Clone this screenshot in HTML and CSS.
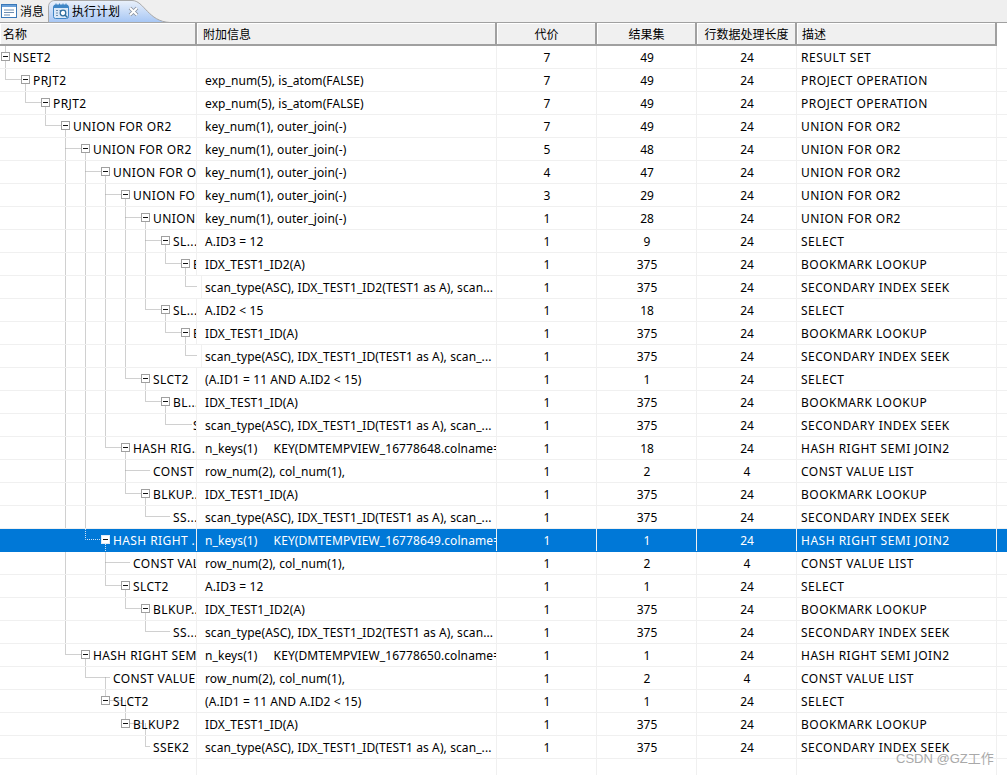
FILE: index.html
```html
<!DOCTYPE html>
<html lang="zh-CN">
<head>
<meta charset="utf-8">
<title>执行计划</title>
<link rel="stylesheet" href="styles.css">
</head>
<body>
<div class="app">
  <div class="tabs">
    <div class="tab">
      <svg class="ticon" width="16" height="14" viewBox="0 0 16 14"><rect x="0.500" y="0.500" width="15" height="13" fill="#fff" stroke="#3a78b8"/><rect x="1" y="1" width="14" height="2" fill="#6aa0d8"/><path d="M3 6h10M3 8.500h10M3 11h6" stroke="#6d8db0" fill="none"/></svg>
      <span>消息</span>
    </div>
    <div class="tab active">
      <svg class="tabshape" width="126" height="23" viewBox="0 0 126 23"><defs><linearGradient id="tabfill" x1="0" y1="0" x2="0" y2="1"><stop offset="0" stop-color="#eaf1fb"/><stop offset="1" stop-color="#a6c6f4"/></linearGradient></defs><path d="M0.500 22.500V7C0.500 3 3 0.500 7 0.500H84C96 0.500 100 21.500 122 22.500Z" fill="url(#tabfill)" stroke="#a8a8a8"/></svg>
      <svg class="ticon" width="16" height="16" viewBox="0 0 16 16"><rect x="0.500" y="2" width="15" height="13.500" rx="2" fill="#dbe9f8" stroke="#3f86c6"/><rect x="1" y="2" width="14" height="3" fill="#3f86c6"/><path d="M3 0.500v3M6.500 0.500v3M10 0.500v3M13 0.500v3" stroke="#3f86c6"/><path d="M3 7.500h2M3 10h2M3 12.500h2M6.500 7.500h2" stroke="#6d8db0"/><circle cx="10" cy="10" r="2.800" fill="#fff" stroke="#2f6f9f" stroke-width="1.300"/><path d="M12 12l2.500 2.500" stroke="#2f6f9f" stroke-width="1.500"/></svg>
      <span>执行计划</span>
      <svg class="close" width="11" height="11" viewBox="0 0 11 11"><path d="M2 2l7 7M9 2l-7 7" stroke="#8a929e" stroke-width="3.600"/><path d="M2 2l7 7M9 2l-7 7" stroke="#fff" stroke-width="2"/></svg>
    </div>
  </div>

  <div class="table">
    <div class="head">
      <div class="hcell">名称</div>
      <div class="hcell">附加信息</div>
      <div class="hcell mid">代价</div>
      <div class="hcell mid">结果集</div>
      <div class="hcell mid">行数据处理长度</div>
      <div class="hcell">描述</div>
    </div>

    <div class="body">
      <svg class="guides" width="197" height="729" viewBox="0 46 197 729">
        <path transform="translate(0 -0.500)" d="M5.500 46V80H22M25.500 80V103H42M45.500 103V126H62M65.500 126V149H82M65.500 149V655H82M85.500 149V172H102M85.500 172V529M105.500 172V195H122M105.500 195V448H122M125.500 195V218H142M125.500 218V379H142M145.500 218V241H162M145.500 241V310H162M165.500 241V264H182M185.500 264V287H197M165.500 310V333H182M185.500 333V356H197M145.500 379V402H162M165.500 402V425H192M125.500 448V471H150M125.500 471V494H142M145.500 494V517H170M105.500 552V563H130M105.500 563V586H122M125.500 586V609H142M145.500 609V632H170M85.500 655V678H110M105.500 678V701H122M125.500 701V724H142M145.500 724V747H150" fill="none" stroke="#a0a0a0" stroke-dasharray="1 1"/>
      </svg>

      <div class="row"><div class="cell name d0"><i class="box"></i><span>NSET2</span></div><div class="cell info"></div><div class="cell num">7</div><div class="cell num">49</div><div class="cell num">24</div><div class="cell desc">RESULT SET</div><div class="tail"></div></div>
      <div class="row"><div class="cell name d1"><i class="box"></i><span>PRJT2</span></div><div class="cell info">exp_num(5), is_atom(FALSE)</div><div class="cell num">7</div><div class="cell num">49</div><div class="cell num">24</div><div class="cell desc">PROJECT OPERATION</div><div class="tail"></div></div>
      <div class="row"><div class="cell name d2"><i class="box"></i><span>PRJT2</span></div><div class="cell info">exp_num(5), is_atom(FALSE)</div><div class="cell num">7</div><div class="cell num">49</div><div class="cell num">24</div><div class="cell desc">PROJECT OPERATION</div><div class="tail"></div></div>
      <div class="row"><div class="cell name d3"><i class="box"></i><span>UNION FOR OR2</span></div><div class="cell info">key_num(1), outer_join(-)</div><div class="cell num">7</div><div class="cell num">49</div><div class="cell num">24</div><div class="cell desc">UNION FOR OR2</div><div class="tail"></div></div>
      <div class="row"><div class="cell name d4"><i class="box"></i><span>UNION FOR OR2</span></div><div class="cell info">key_num(1), outer_join(-)</div><div class="cell num">5</div><div class="cell num">48</div><div class="cell num">24</div><div class="cell desc">UNION FOR OR2</div><div class="tail"></div></div>
      <div class="row"><div class="cell name d5"><i class="box"></i><span>UNION FOR OR2</span></div><div class="cell info">key_num(1), outer_join(-)</div><div class="cell num">4</div><div class="cell num">47</div><div class="cell num">24</div><div class="cell desc">UNION FOR OR2</div><div class="tail"></div></div>
      <div class="row"><div class="cell name d6"><i class="box"></i><span>UNION FOR OR2</span></div><div class="cell info">key_num(1), outer_join(-)</div><div class="cell num">3</div><div class="cell num">29</div><div class="cell num">24</div><div class="cell desc">UNION FOR OR2</div><div class="tail"></div></div>
      <div class="row"><div class="cell name d7"><i class="box"></i><span>UNION FOR OR2</span></div><div class="cell info">key_num(1), outer_join(-)</div><div class="cell num">1</div><div class="cell num">28</div><div class="cell num">24</div><div class="cell desc">UNION FOR OR2</div><div class="tail"></div></div>
      <div class="row"><div class="cell name d8"><i class="box"></i><span>SL...</span></div><div class="cell info">A.ID3 = 12</div><div class="cell num">1</div><div class="cell num">9</div><div class="cell num">24</div><div class="cell desc">SELECT</div><div class="tail"></div></div>
      <div class="row"><div class="cell name d9"><i class="box"></i><span>BLKUP2</span></div><div class="cell info">IDX_TEST1_ID2(A)</div><div class="cell num">1</div><div class="cell num">375</div><div class="cell num">24</div><div class="cell desc">BOOKMARK LOOKUP</div><div class="tail"></div></div>
      <div class="row"><div class="cell name d10"><i class="box leaf"></i><span>SSEK2</span></div><div class="cell info">scan_type(ASC), IDX_TEST1_ID2(TEST1 as A), scan...</div><div class="cell num">1</div><div class="cell num">375</div><div class="cell num">24</div><div class="cell desc">SECONDARY INDEX SEEK</div><div class="tail"></div></div>
      <div class="row"><div class="cell name d8"><i class="box"></i><span>SL...</span></div><div class="cell info">A.ID2 &lt; 15</div><div class="cell num">1</div><div class="cell num">18</div><div class="cell num">24</div><div class="cell desc">SELECT</div><div class="tail"></div></div>
      <div class="row"><div class="cell name d9"><i class="box"></i><span>BLKUP2</span></div><div class="cell info">IDX_TEST1_ID(A)</div><div class="cell num">1</div><div class="cell num">375</div><div class="cell num">24</div><div class="cell desc">BOOKMARK LOOKUP</div><div class="tail"></div></div>
      <div class="row"><div class="cell name d10"><i class="box leaf"></i><span>SSEK2</span></div><div class="cell info">scan_type(ASC), IDX_TEST1_ID(TEST1 as A), scan_...</div><div class="cell num">1</div><div class="cell num">375</div><div class="cell num">24</div><div class="cell desc">SECONDARY INDEX SEEK</div><div class="tail"></div></div>
      <div class="row"><div class="cell name d7"><i class="box"></i><span>SLCT2</span></div><div class="cell info">(A.ID1 = 11 AND A.ID2 &lt; 15)</div><div class="cell num">1</div><div class="cell num">1</div><div class="cell num">24</div><div class="cell desc">SELECT</div><div class="tail"></div></div>
      <div class="row"><div class="cell name d8"><i class="box"></i><span>BL...</span></div><div class="cell info">IDX_TEST1_ID(A)</div><div class="cell num">1</div><div class="cell num">375</div><div class="cell num">24</div><div class="cell desc">BOOKMARK LOOKUP</div><div class="tail"></div></div>
      <div class="row"><div class="cell name d9"><i class="box leaf"></i><span>SSEK2</span></div><div class="cell info">scan_type(ASC), IDX_TEST1_ID(TEST1 as A), scan_...</div><div class="cell num">1</div><div class="cell num">375</div><div class="cell num">24</div><div class="cell desc">SECONDARY INDEX SEEK</div><div class="tail"></div></div>
      <div class="row"><div class="cell name d6"><i class="box"></i><span>HASH RIG...</span></div><div class="cell info">n_keys(1) &nbsp; &nbsp; KEY(DMTEMPVIEW_16778648.colname=DMTEMPVIEW</div><div class="cell num">1</div><div class="cell num">18</div><div class="cell num">24</div><div class="cell desc">HASH RIGHT SEMI JOIN2</div><div class="tail"></div></div>
      <div class="row"><div class="cell name d7"><i class="box leaf"></i><span>CONST VALUE LIST</span></div><div class="cell info">row_num(2), col_num(1),</div><div class="cell num">1</div><div class="cell num">2</div><div class="cell num">4</div><div class="cell desc">CONST VALUE LIST</div><div class="tail"></div></div>
      <div class="row"><div class="cell name d7"><i class="box"></i><span>BLKUP...</span></div><div class="cell info">IDX_TEST1_ID(A)</div><div class="cell num">1</div><div class="cell num">375</div><div class="cell num">24</div><div class="cell desc">BOOKMARK LOOKUP</div><div class="tail"></div></div>
      <div class="row"><div class="cell name d8"><i class="box leaf"></i><span>SS...</span></div><div class="cell info">scan_type(ASC), IDX_TEST1_ID(TEST1 as A), scan_...</div><div class="cell num">1</div><div class="cell num">375</div><div class="cell num">24</div><div class="cell desc">SECONDARY INDEX SEEK</div><div class="tail"></div></div>
      <div class="row selected">
        <svg class="selguide" width="30" height="23" viewBox="0 0 30 23"><path d="M5.500 0V10.500H21M25.500 15V23" fill="none" stroke="#cfe2f6" stroke-dasharray="1 1"/></svg>
        <div class="cell name d5"><i class="box"></i><span>HASH RIGHT ...</span></div><div class="cell info">n_keys(1) &nbsp; &nbsp; KEY(DMTEMPVIEW_16778649.colname=DMTEMPVIEW</div><div class="cell num">1</div><div class="cell num">1</div><div class="cell num">24</div><div class="cell desc">HASH RIGHT SEMI JOIN2</div><div class="tail"></div></div>
      <div class="row"><div class="cell name d6"><i class="box leaf"></i><span>CONST VALUE LIST</span></div><div class="cell info">row_num(2), col_num(1),</div><div class="cell num">1</div><div class="cell num">2</div><div class="cell num">4</div><div class="cell desc">CONST VALUE LIST</div><div class="tail"></div></div>
      <div class="row"><div class="cell name d6"><i class="box"></i><span>SLCT2</span></div><div class="cell info">A.ID3 = 12</div><div class="cell num">1</div><div class="cell num">1</div><div class="cell num">24</div><div class="cell desc">SELECT</div><div class="tail"></div></div>
      <div class="row"><div class="cell name d7"><i class="box"></i><span>BLKUP...</span></div><div class="cell info">IDX_TEST1_ID2(A)</div><div class="cell num">1</div><div class="cell num">375</div><div class="cell num">24</div><div class="cell desc">BOOKMARK LOOKUP</div><div class="tail"></div></div>
      <div class="row"><div class="cell name d8"><i class="box leaf"></i><span>SS...</span></div><div class="cell info">scan_type(ASC), IDX_TEST1_ID2(TEST1 as A), scan...</div><div class="cell num">1</div><div class="cell num">375</div><div class="cell num">24</div><div class="cell desc">SECONDARY INDEX SEEK</div><div class="tail"></div></div>
      <div class="row"><div class="cell name d4"><i class="box"></i><span>HASH RIGHT SEMI JOIN2</span></div><div class="cell info">n_keys(1) &nbsp; &nbsp; KEY(DMTEMPVIEW_16778650.colname=DMTEMPVIEW</div><div class="cell num">1</div><div class="cell num">1</div><div class="cell num">24</div><div class="cell desc">HASH RIGHT SEMI JOIN2</div><div class="tail"></div></div>
      <div class="row"><div class="cell name d5"><i class="box leaf"></i><span>CONST VALUE LIST</span></div><div class="cell info">row_num(2), col_num(1),</div><div class="cell num">1</div><div class="cell num">2</div><div class="cell num">4</div><div class="cell desc">CONST VALUE LIST</div><div class="tail"></div></div>
      <div class="row"><div class="cell name d5"><i class="box"></i><span>SLCT2</span></div><div class="cell info">(A.ID1 = 11 AND A.ID2 &lt; 15)</div><div class="cell num">1</div><div class="cell num">1</div><div class="cell num">24</div><div class="cell desc">SELECT</div><div class="tail"></div></div>
      <div class="row"><div class="cell name d6"><i class="box"></i><span>BLKUP2</span></div><div class="cell info">IDX_TEST1_ID(A)</div><div class="cell num">1</div><div class="cell num">375</div><div class="cell num">24</div><div class="cell desc">BOOKMARK LOOKUP</div><div class="tail"></div></div>
      <div class="row"><div class="cell name d7"><i class="box leaf"></i><span>SSEK2</span></div><div class="cell info">scan_type(ASC), IDX_TEST1_ID(TEST1 as A), scan_...</div><div class="cell num">1</div><div class="cell num">375</div><div class="cell num">24</div><div class="cell desc">SECONDARY INDEX SEEK</div><div class="tail"></div></div>
      <div class="filler"><div></div><div></div><div></div><div></div><div></div><div></div></div>
    </div>
  </div>
  <div class="watermark">CSDN @GZ工作</div>
</div>
</body>
</html>
```
FILE: styles.css
```css
* { box-sizing: border-box; }
html, body { margin: 0; height: 100%; overflow: hidden; background: #fff; }
body { font: 12px "Noto Sans", "Noto Sans CJK SC", sans-serif; color: #000; }
.app { position: relative; width: 1007px; height: 775px; display: flex; flex-direction: column; }

.tabs { height: 22px; flex: none; display: flex; background: #efefef; }
.tab { display: flex; align-items: center; height: 22px; }
.tab:first-child { width: 48px; padding-left: 1px; gap: 3px; }
.tab.active { position: relative; width: 126px; padding-left: 5px; gap: 3px; }
.tab > span, .hcell { font-family: "Noto Sans CJK SC", "Noto Sans", sans-serif; }
.tab > span { position: relative; line-height: 16px; }
.tabshape { position: absolute; left: 0; top: 0; }
.ticon, .close { position: relative; flex: none; }
.close { margin-left: 5px; }

.table { flex: 1; display: flex; flex-direction: column; min-height: 0; }
.head, .row, .filler { display: grid; grid-template-columns: 197px 300px 100px 100px 100px 200px 10px; }
.head { height: 24px; flex: none; border-top: 1px solid #a0a0a0; }
.hcell { height: 23px; padding: 0 3px; line-height: 22px; background: #f0f0f0; border-right: 2px solid #a0a0a0; border-bottom: 2px solid #a0a0a0; box-shadow: inset 1px 1px 0 #fff; white-space: nowrap; overflow: hidden; }
.hcell:nth-child(2) { padding-left: 6px; }
.hcell:nth-child(6) { padding-left: 5px; }
.hcell.mid { text-align: center; padding: 0 0 0 1px; }

.body { position: relative; flex: 1; display: flex; flex-direction: column; min-height: 0; }
.guides { position: absolute; left: 0; top: 0; }
.row { position: relative; height: 23px; flex: none; border-bottom: 1px solid #f0f0f0; }
.cell { height: 22px; line-height: 24px; padding-left: 4px; border-right: 1px solid #f0f0f0; white-space: nowrap; overflow: hidden; }
.info { padding-left: 8px; letter-spacing: 0.1px; }
.desc { letter-spacing: 0.5px; }
.num { text-align: center; padding-left: 1px; }
.name { display: flex; align-items: flex-start; letter-spacing: 0.4px; }
.name span { flex: none; }
.box { flex: none; position: relative; width: 9px; height: 9px; margin: 6px 3px 0 0; background: #fff; border: 1px solid #a0a0a0; }
.box::after { content: ""; position: absolute; left: 1px; right: 1px; top: 3px; height: 1px; background: #111; }
.box.leaf { visibility: hidden; }
.d0 { padding-left: 1px; } .d1 { padding-left: 21px; } .d2 { padding-left: 41px; } .d3 { padding-left: 61px; }
.d4 { padding-left: 81px; } .d5 { padding-left: 101px; } .d6 { padding-left: 121px; } .d7 { padding-left: 141px; }
.d8 { padding-left: 161px; } .d9 { padding-left: 181px; } .d10 { padding-left: 201px; }

.selected { background: #0078d7; color: #fff; border-bottom-color: #0078d7; }
.selected .box { border-color: #dfeaf5; }
.selguide { position: absolute; left: 80px; top: 0; }

.filler { flex: 1; }
.filler div { border-right: 1px solid #f0f0f0; }
.watermark { position: absolute; left: 896px; top: 751px; font: 13px "Liberation Sans", "Noto Sans CJK SC", sans-serif; line-height: 16px; color: #a9a9a9; white-space: nowrap; }
```
